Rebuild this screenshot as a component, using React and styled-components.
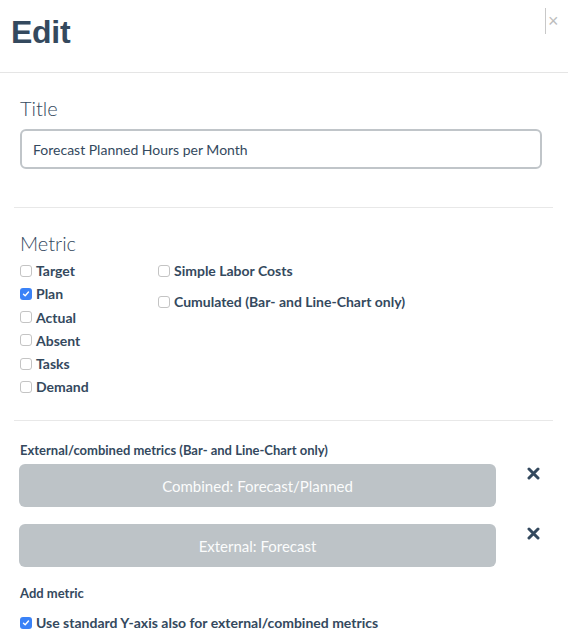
import React from "react";
import styled, { createGlobalStyle } from "styled-components";

const Global = createGlobalStyle`
  html, body { margin: 0; padding: 0; background: #fff; }
  body { font-family: Lato, "Open Sans", sans-serif; color: #34495e; }
  * { box-sizing: border-box; }
`;

const Page = styled.div`
  width: 568px;
  height: 643px;
  overflow: hidden;
  background: #fff;
`;

const Header = styled.div`
  position: relative;
  height: 73px;
  border-bottom: 1px solid #e5e5e5;
  padding: 14px 0 0 11px;
`;

const Heading = styled.h1`
  margin: 0;
  font-family: "Liberation Sans", Arial, sans-serif;
  font-weight: 700;
  font-size: 32px;
  line-height: 36px;
  letter-spacing: -0.3px;
  color: #34495e;
`;

const Close = styled.button`
  position: absolute;
  top: 8px;
  left: 545px;
  height: 26px;
  padding: 0 0 0 2px;
  border: none;
  border-left: 1px solid #c8c8c8;
  background: transparent;
  color: #bdbdbd;
  font-family: "Liberation Sans", Arial, sans-serif;
  font-size: 18px;
  line-height: 24px;
`;

const Body = styled.div`
  padding: 0 15px 0 14px;
`;

const Section = styled.div`
  padding: ${(p) => p.$pad || "0"};
  border-bottom: ${(p) => (p.$last ? "none" : "1px solid #e8e8e8")};
  padding-left: 6px;
`;

const Legend = styled.div`
  font-weight: 300;
  font-size: 20px;
  line-height: 24px;
  color: #34495e;
  margin-bottom: ${(p) => p.$mb || "8px"};
`;

const Input = styled.div`
  width: 522px;
  height: 40px;
  border: 2px solid #c0c5c9;
  border-radius: 6px;
  padding: 0 11px;
  display: flex;
  align-items: center;
  font-size: 14px;
  font-weight: 400;
  color: #34495e;
`;

const Columns = styled.div`
  display: flex;
`;

const Col = styled.div`
  display: flex;
  flex-direction: column;
  gap: ${(p) => p.$gap};
  width: ${(p) => p.$w || "auto"};
`;

const CheckRow = styled.label`
  display: flex;
  align-items: center;
  gap: 4px;
  font-weight: 700;
  font-size: ${(p) => p.$size || "14px"};
  line-height: 17px;
  color: #34495e;
  white-space: nowrap;
`;

const Box = styled.span`
  width: 12px;
  height: 12px;
  border-radius: 3px;
  flex: none;
  display: inline-flex;
  align-items: center;
  justify-content: center;
  border: ${(p) => (p.$on ? "none" : "1px solid #c4c4c4")};
  background: ${(p) => (p.$on ? "#3a82f7" : "#fff")};
`;

const Check = ({ on }) => (
  <Box $on={on}>
    {on && (
      <svg width="8" height="8" viewBox="0 0 8 8">
        <path d="M1.5 4.2 L3.2 5.8 L6.5 2" fill="none" stroke="#fff" strokeWidth="1.4" strokeLinecap="round" strokeLinejoin="round" />
      </svg>
    )}
  </Box>
);

const SubLabel = styled.div`
  font-weight: 700;
  font-size: 13px;
  line-height: 16px;
  color: #34495e;
  margin-bottom: ${(p) => p.$mb || "0"};
`;

const MetricRow = styled.div`
  display: flex;
  align-items: flex-start;
  margin-bottom: ${(p) => p.$mb || "0"};
`;

const MetricButton = styled.button`
  width: 477px;
  height: 43px;
  margin-left: -1px;
  border: none;
  border-radius: 6px;
  background: #bdc3c7;
  color: #fbfcfc;
  font-family: Lato, sans-serif;
  font-size: 15px;
  font-weight: 400;
`;

const Remove = styled.span`
  margin: 3px 0 0 31px;
  display: inline-flex;
`;

const XIcon = () => (
  <svg width="13" height="13" viewBox="0 0 13 13">
    <path d="M2 2 L11 11 M11 2 L2 11" stroke="#34495e" strokeWidth="3" strokeLinecap="round" />
  </svg>
);

const leftItems = [
  ["Target", false],
  ["Plan", true],
  ["Actual", false],
  ["Absent", false],
  ["Tasks", false],
  ["Demand", false],
];

export default function App() {
  return (
    <Page>
      <Global />
      <Header>
        <Heading>Edit</Heading>
        <Close aria-label="close">×</Close>
      </Header>
      <Body>
        <Section $pad="23px 0 38px 6px">
          <Legend $mb="9px">Title</Legend>
          <Input>Forecast Planned Hours per Month</Input>
        </Section>
        <Section $pad="23px 0 25px 6px">
          <Legend $mb="7px">Metric</Legend>
          <Columns>
            <Col $w="138px" $gap="6.3px">
              {leftItems.map(([t, on]) => (
                <CheckRow key={t}>
                  <Check on={on} />
                  {t}
                </CheckRow>
              ))}
            </Col>
            <Col $gap="14px">
              <CheckRow>
                <Check />
                Simple Labor Costs
              </CheckRow>
              <CheckRow>
                <Check />
                Cumulated (Bar- and Line-Chart only)
              </CheckRow>
            </Col>
          </Columns>
        </Section>
        <Section $last $pad="21px 0 0 6px">
          <SubLabel $mb="6px">External/combined metrics (Bar- and Line-Chart only)</SubLabel>
          <MetricRow $mb="17px">
            <MetricButton>Combined: Forecast/Planned</MetricButton>
            <Remove><XIcon /></Remove>
          </MetricRow>
          <MetricRow $mb="18px">
            <MetricButton>External: Forecast</MetricButton>
            <Remove><XIcon /></Remove>
          </MetricRow>
          <SubLabel $mb="13px">Add metric</SubLabel>
          <CheckRow $size="14px">
            <Check on />
            Use standard Y-axis also for external/combined metrics
          </CheckRow>
        </Section>
      </Body>
    </Page>
  );
}
